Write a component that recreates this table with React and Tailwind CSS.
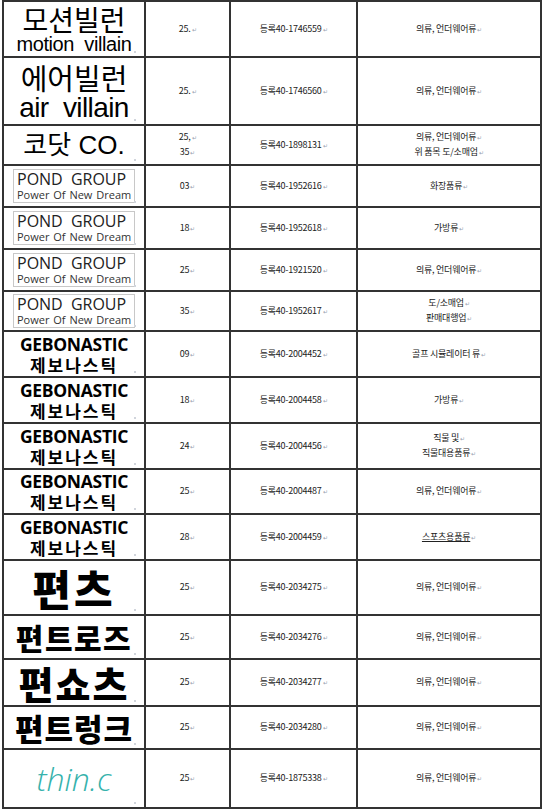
import React from 'react';

const KR = { fontFamily: '"Noto Sans CJK KR", "Noto Sans", sans-serif' };

// tiny paragraph mark that trails each cell's text
function Mark() {
    return <span className="ml-px text-[6px] text-gray-400 align-baseline">↵</span>;
}

function Small({ lines }) {
    return (
        <div className="flex flex-col items-center text-[9px] leading-[14px] tracking-tight text-[#222]" style={KR}>
            {lines.map((l, i) => (
                <span key={i}>{l}<Mark /></span>
            ))}
        </div>
    );
}

function Pond() {
    return (
        <div className="flex flex-col items-start whitespace-nowrap border border-[#c8c8c8] pl-[3px] pr-[2px] w-[122px]" style={{ fontFamily: '"Open Sans", sans-serif' }}>
            <span className="text-[16px] leading-[18px] text-[#222] [word-spacing:4px]">POND GROUP</span>
            <span className="text-[11px] leading-[13px] pb-px text-[#333] [word-spacing:1px]">Power Of New Dream</span>
        </div>
    );
}

function Gebo() {
    return (
        <div className="flex flex-col items-center leading-none text-black">
            <span className="text-[17.5px] font-bold leading-[20px] tracking-[-0.3px]" style={{ fontFamily: '"Open Sans", sans-serif' }}>GEBONASTIC</span>
            <span className="text-[17px] font-bold leading-[21px] tracking-[2px]" style={KR}>제보나스틱</span>
        </div>
    );
}

const rows = [
    {
        h: 'h-[56px]', logo: (
            <div className="flex flex-col items-center text-black">
                <span className="text-[28px] leading-[30px]" style={KR}>모션빌런</span>
                <span className="text-[20px] leading-[20px] tracking-[-0.4px]" style={{ fontFamily: '"Liberation Sans", sans-serif' }}>motion&nbsp; villain</span>
            </div>
        ), cls: ['25.'], no: '등록40-1746559', goods: ['의류, 언더웨어류'],
    },
    {
        h: 'h-[68px]', logo: (
            <div className="flex flex-col items-center text-black">
                <span className="text-[29px] leading-[33px]" style={KR}>에어빌런</span>
                <span className="text-[28px] leading-[28px] tracking-[-0.6px]" style={{ fontFamily: '"Liberation Sans", sans-serif' }}>air&nbsp; villain</span>
            </div>
        ), cls: ['25.'], no: '등록40-1746560', goods: ['의류, 언더웨어류'],
    },
    {
        h: 'h-[40px]', logo: (
            <span className="text-[26px] leading-none text-black" style={{ fontFamily: '"Liberation Sans", "Noto Sans CJK KR", sans-serif' }}>코닷&nbsp;CO.</span>
        ), cls: ['25,', '35'], no: '등록40-1898131', goods: ['의류, 언더웨어류', '위 품목 도/소매업'],
    },
    { h: 'h-[42px]', logo: <Pond />, cls: ['03'], no: '등록40-1952616', goods: ['화장품류'] },
    { h: 'h-[42px]', logo: <Pond />, cls: ['18'], no: '등록40-1952618', goods: ['가방류'] },
    { h: 'h-[42px]', logo: <Pond />, cls: ['25'], no: '등록40-1921520', goods: ['의류, 언더웨어류'] },
    { h: 'h-[40px]', logo: <Pond />, cls: ['35'], no: '등록40-1952617', goods: ['도/소매업', '판매대행업'] },
    { h: 'h-[46px]', logo: <Gebo />, cls: ['09'], no: '등록40-2004452', goods: ['골프 시뮬레이터 류'] },
    { h: 'h-[46px]', logo: <Gebo />, cls: ['18'], no: '등록40-2004458', goods: ['가방류'] },
    { h: 'h-[46px]', logo: <Gebo />, cls: ['24'], no: '등록40-2004456', goods: ['직물 및', '직물대용품류'] },
    { h: 'h-[45px]', logo: <Gebo />, cls: ['25'], no: '등록40-2004487', goods: ['의류, 언더웨어류'] },
    { h: 'h-[46px]', logo: <Gebo />, cls: ['28'], no: '등록40-2004459', goods: ['스포츠용품류'], underline: true },
    {
        h: 'h-[55px]', logo: (
            <span className="text-[42px] font-black leading-none tracking-[3px] text-black" style={KR}>편츠</span>
        ), cls: ['25'], no: '등록40-2034275', goods: ['의류, 언더웨어류'],
    },
    {
        h: 'h-[44px]', logo: (
            <span className="text-[30px] font-black leading-none tracking-[1.5px] text-black" style={KR}>편트로즈</span>
        ), cls: ['25'], no: '등록40-2034276', goods: ['의류, 언더웨어류'],
    },
    {
        h: 'h-[47px]', logo: (
            <span className="text-[38px] font-black leading-none tracking-[2px] text-black" style={KR}>편쇼츠</span>
        ), cls: ['25'], no: '등록40-2034277', goods: ['의류, 언더웨어류'],
    },
    {
        h: 'h-[43px]', logo: (
            <span className="text-[31px] font-black leading-none tracking-[1px] text-black" style={KR}>편트렁크</span>
        ), cls: ['25'], no: '등록40-2034280', goods: ['의류, 언더웨어류'],
    },
    {
        h: 'h-[57px]', logo: (
            <span className="text-[32px] font-light italic leading-none text-[#36b2ac]" style={{ fontFamily: '"Open Sans", sans-serif' }}>thin.c</span>
        ), cls: ['25'], no: '등록40-1875338', goods: ['의류, 언더웨어류'], last: true,
    },
];

export default function App() {
    return (
        <div className="w-[544px] h-[810px] bg-white overflow-hidden">
            <div className="ml-[2px] w-[540px] border-2 border-[#333] bg-white">
                {rows.map((r, i) => (
                    <div key={i} className={`flex ${r.h} ${r.last ? '' : 'border-b-2 border-[#333]'}`}>
                        <div className="relative w-[142px] shrink-0 border-r-2 border-[#333] flex items-center justify-center">
                            {r.logo}
                            <span className="absolute right-[8px] bottom-[3px] w-[2px] h-[2px] bg-gray-300" />
                        </div>
                        <div className="w-[85px] shrink-0 border-r-2 border-[#333] flex items-center justify-center">
                            <Small lines={r.cls} />
                        </div>
                        <div className="w-[127px] shrink-0 border-r-2 border-[#333] flex items-center justify-center">
                            <Small lines={[r.no]} />
                        </div>
                        <div className="flex-1 flex items-center justify-center">
                            {r.underline ? (
                                <div className="text-[9px] tracking-tight text-[#222]" style={KR}>
                                    <span className="underline">스포츠용품류</span><Mark />
                                </div>
                            ) : (
                                <Small lines={r.goods} />
                            )}
                        </div>
                    </div>
                ))}
            </div>
        </div>
    );
}
